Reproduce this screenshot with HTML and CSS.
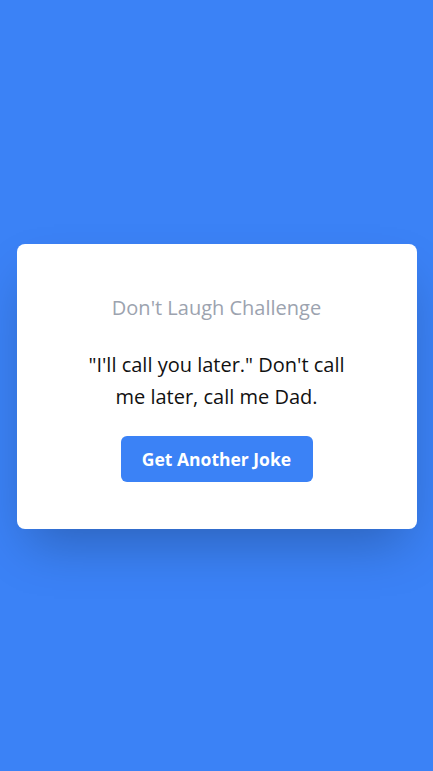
FILE: index.html
```html
<!DOCTYPE html>
<html lang="en">
<head>
<meta charset="utf-8">
<title>Don't Laugh Challenge</title>
<link rel="stylesheet" href="styles.css">
</head>
<body>
<main class="screen">
  <section class="card">
    <h1 class="title">Don't Laugh Challenge</h1>
    <p class="joke">"I'll call you later." Don't call me later, call me Dad.</p>
    <button class="btn" type="button">Get Another Joke</button>
  </section>
</main>
</body>
</html>
```
FILE: styles.css
```css
* { box-sizing: border-box; }
html, body { margin: 0; padding: 0; height: 100%; }
body {
  background: #3b82f6;
  font-family: "Open Sans", "Noto Sans", sans-serif;
}
.screen {
  min-height: 100vh;
  display: flex;
  align-items: center;
  justify-content: center;
  padding: 2px 16px 0;
}
.card {
  width: 100%;
  max-width: 400px;
  background: #fff;
  border-radius: 8px;
  padding: 50px 24px 47px;
  display: flex;
  flex-direction: column;
  align-items: center;
  text-align: center;
  box-shadow: 0 25px 50px -12px rgba(0, 0, 0, 0.25);
}
.title {
  margin: 0 0 27px;
  font-size: 20px;
  line-height: 28px;
  font-weight: 400;
  color: #9ca3af;
}
.joke {
  margin: 0 0 23px;
  max-width: 280px;
  font-size: 20px;
  line-height: 32px;
  color: #111;
}
.btn {
  width: 192px;
  height: 46px;
  border: 0;
  border-radius: 6px;
  background: #3b82f6;
  color: #fff;
  font-family: inherit;
  font-size: 17.5px;
  font-weight: 700;
  cursor: pointer;
}
```
